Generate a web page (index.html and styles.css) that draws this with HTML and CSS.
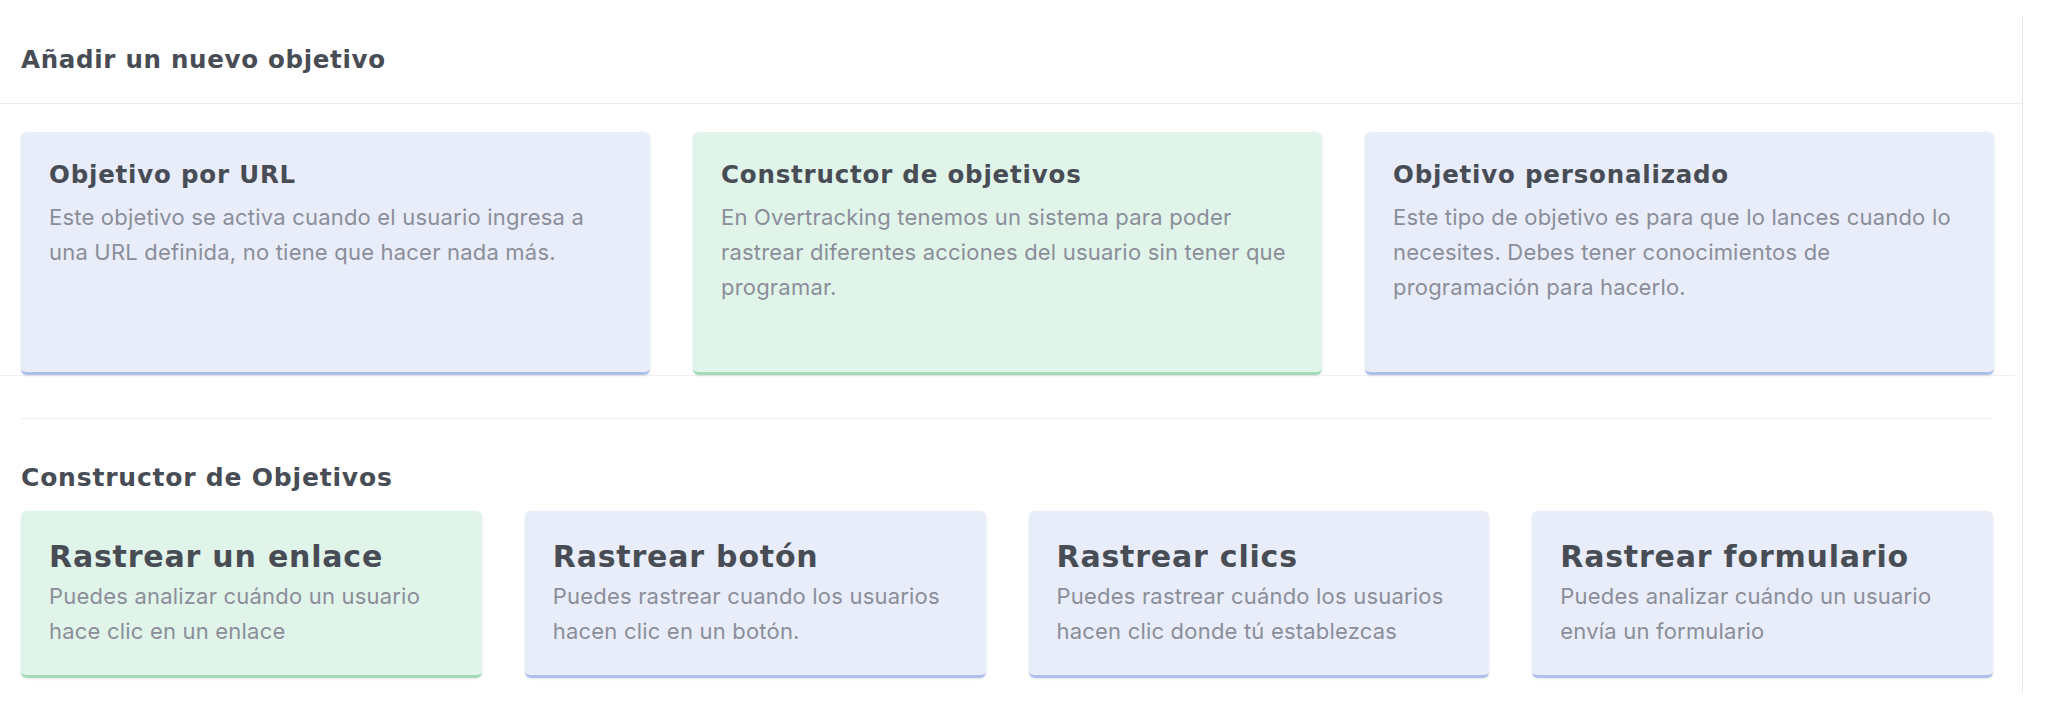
FILE: index.html
```html
<!DOCTYPE html>
<html lang="es">
<head>
<meta charset="utf-8">
<title>Objetivos</title>
<link rel="stylesheet" href="styles.css">
</head>
<body>
<div class="panel">
  <header class="panel-header">
    <h2 class="panel-title">Añadir un nuevo objetivo</h2>
  </header>
  <section class="goal-types">
    <div class="card-grid cols-3">
      <div class="goal-card blue">
        <h3 class="goal-title">Objetivo por URL</h3>
        <p class="goal-desc">Este objetivo se activa cuando el usuario ingresa a una URL definida, no tiene que hacer nada más.</p>
      </div>
      <div class="goal-card green">
        <h3 class="goal-title">Constructor de objetivos</h3>
        <p class="goal-desc">En Overtracking tenemos un sistema para poder rastrear diferentes acciones del usuario sin tener que programar.</p>
      </div>
      <div class="goal-card blue">
        <h3 class="goal-title">Objetivo personalizado</h3>
        <p class="goal-desc">Este tipo de objetivo es para que lo lances cuando lo necesites. Debes tener conocimientos de programación para hacerlo.</p>
      </div>
    </div>
  </section>
  <section class="builder">
    <hr class="divider">
    <h2 class="section-title">Constructor de Objetivos</h2>
    <div class="card-grid cols-4">
      <div class="goal-card green small">
        <h3 class="goal-title big">Rastrear un enlace</h3>
        <p class="goal-desc">Puedes analizar cuándo un usuario hace clic en un enlace</p>
      </div>
      <div class="goal-card blue small">
        <h3 class="goal-title big">Rastrear botón</h3>
        <p class="goal-desc">Puedes rastrear cuando los usuarios hacen clic en un botón.</p>
      </div>
      <div class="goal-card blue small">
        <h3 class="goal-title big">Rastrear clics</h3>
        <p class="goal-desc">Puedes rastrear cuándo los usuarios hacen clic donde tú establezcas</p>
      </div>
      <div class="goal-card blue small">
        <h3 class="goal-title big">Rastrear formulario</h3>
        <p class="goal-desc">Puedes analizar cuándo un usuario envía un formulario</p>
      </div>
    </div>
  </section>
</div>
</body>
</html>
```

FILE: styles.css
```css
* {
  box-sizing: border-box;
}

body {
  margin: 0;
  background: #ffffff;
  color: #474c55;
  font-family: "DejaVu Sans", "Open Sans", sans-serif;
}

.panel {
  margin-top: 15px;
  width: 2023px;
  height: 678px;
  border-right: 1px solid #e9e9ec;
}

.panel-header {
  height: 89px;
  padding: 0 21px;
  display: flex;
  align-items: center;
  border-bottom: 1px solid #ececef;
}

.panel-title,
.section-title {
  margin: 0;
  font-size: 24.5px;
  font-weight: 600;
  letter-spacing: 0.7px;
  color: #474c55;
}

.section-title {
  font-size: 25px;
  letter-spacing: 0.8px;
}

.goal-types {
  margin-right: 7px;
  padding: 28px 21px 0 21px;
  border-bottom: 1px solid #f0f0f2;
}

.card-grid {
  display: grid;
  gap: 43px;
}

.cols-3 {
  grid-template-columns: repeat(3, 1fr);
}

.cols-4 {
  grid-template-columns: repeat(4, 1fr);
}

.goal-card {
  height: 243px;
  padding: 26px 22px 0 28px;
  border-radius: 6px;
  box-shadow: 0 1px 3px rgba(60, 70, 100, 0.12);
}

.goal-card.small {
  height: 167px;
  padding-top: 25px;
}

.goal-card.blue {
  background: #e8edf9;
  border-bottom: 3px solid #aebfea;
}

.goal-card.green {
  background: #e1f4ea;
  border-bottom: 3px solid #a4dab5;
}

.goal-title {
  margin: 0;
  font-size: 24.5px;
  font-weight: 600;
  line-height: 34px;
  letter-spacing: 0.8px;
  color: #474c55;
}

.goal-title.big {
  font-size: 30px;
  line-height: 42px;
}

.goal-desc {
  margin: 8px 0 0 0;
  font-family: Inter, Roboto, "Liberation Sans", sans-serif;
  font-size: 22px;
  letter-spacing: 0.2px;
  line-height: 35px;
  color: #8b8e99;
}

.small .goal-desc {
  margin-top: 1px;
}

.builder {
  padding: 0 29px 0 21px;
}

.divider {
  margin: 42px 0 0 0;
  border: 0;
  border-top: 1px solid #f0f0f2;
  height: 0;
}

.section-title {
  margin: 44px 0 18px 0;
  line-height: 30px;
}
```
